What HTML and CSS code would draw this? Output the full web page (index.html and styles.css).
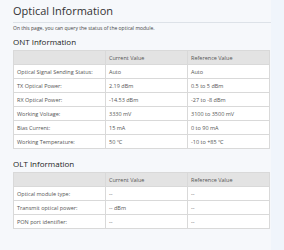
FILE: index.html
```html
<!DOCTYPE html>
<html>
<head>
<meta charset="utf-8">
<link rel="stylesheet" href="styles.css">
</head>
<body>
<div class="page">
  <h1 class="title">Optical Information</h1>
  <p class="desc">On this page, you can query the status of the optical module.</p>
  <h2 class="section first">ONT Information</h2>
  <table class="info">
    <thead>
      <tr><th class="c1"></th><th class="c2">Current Value</th><th>Reference Value</th></tr>
    </thead>
    <tbody>
      <tr><td>Optical Signal Sending Status:</td><td>Auto</td><td>Auto</td></tr>
      <tr><td>TX Optical Power:</td><td>2.19 dBm</td><td>0.5 to 5 dBm</td></tr>
      <tr><td>RX Optical Power:</td><td>-14.53 dBm</td><td>-27 to -8 dBm</td></tr>
      <tr><td>Working Voltage:</td><td>3330 mV</td><td>3100 to 3500 mV</td></tr>
      <tr><td>Bias Current:</td><td>15 mA</td><td>0 to 90 mA</td></tr>
      <tr><td>Working Temperature:</td><td>50 ℃</td><td>-10 to +85 ℃</td></tr>
    </tbody>
  </table>
  <h2 class="section">OLT Information</h2>
  <table class="info">
    <thead>
      <tr><th class="c1"></th><th class="c2">Current Value</th><th>Reference Value</th></tr>
    </thead>
    <tbody>
      <tr><td>Optical module type:</td><td>--</td><td>--</td></tr>
      <tr><td>Transmit optical power:</td><td>-- dBm</td><td>--</td></tr>
      <tr><td>PON port identifier:</td><td>--</td><td>--</td></tr>
    </tbody>
  </table>
</div>
</body>
</html>
```
FILE: styles.css
```css
html, body {
  margin: 0;
  padding: 0;
  background: #f0f5fb;
  font-family: "Open Sans", "Noto Sans", sans-serif;
  color: #333;
}
.page {
  width: 271px;
  box-sizing: border-box;
  padding: 3px 0 10px 13px;
  background: #f6f8fb;
  min-height: 250px;
}
.title {
  margin: 0;
  font-size: 11px;
  font-weight: normal;
  line-height: 16px;
  padding-bottom: 3px;
  border-bottom: 1px solid #dde2e8;
}
.desc {
  margin: 1px 0 0;
  font-size: 5px;
  line-height: 8px;
  color: #444;
}
.section {
  margin: 10px 0 3px;
  font-size: 8px;
  font-weight: normal;
  line-height: 10px;
  color: #222;
}
.section.first {
  margin-top: 5px;
}
.info {
  width: 257px;
  border-collapse: collapse;
  font-size: 5.5px;
  background: #fff;
  border: 1px solid #d9d9d9;
}
.info th, .info td {
  border: 1px solid #d9d9d9;
  text-align: left;
  font-weight: normal;
  padding: 0 3px;
  height: 13px;
  color: #555;
}
.info th {
  background: #e3e3e3;
  color: #555;
}
.c1 { width: 85px; }
.c2 { width: 75px; }
```
